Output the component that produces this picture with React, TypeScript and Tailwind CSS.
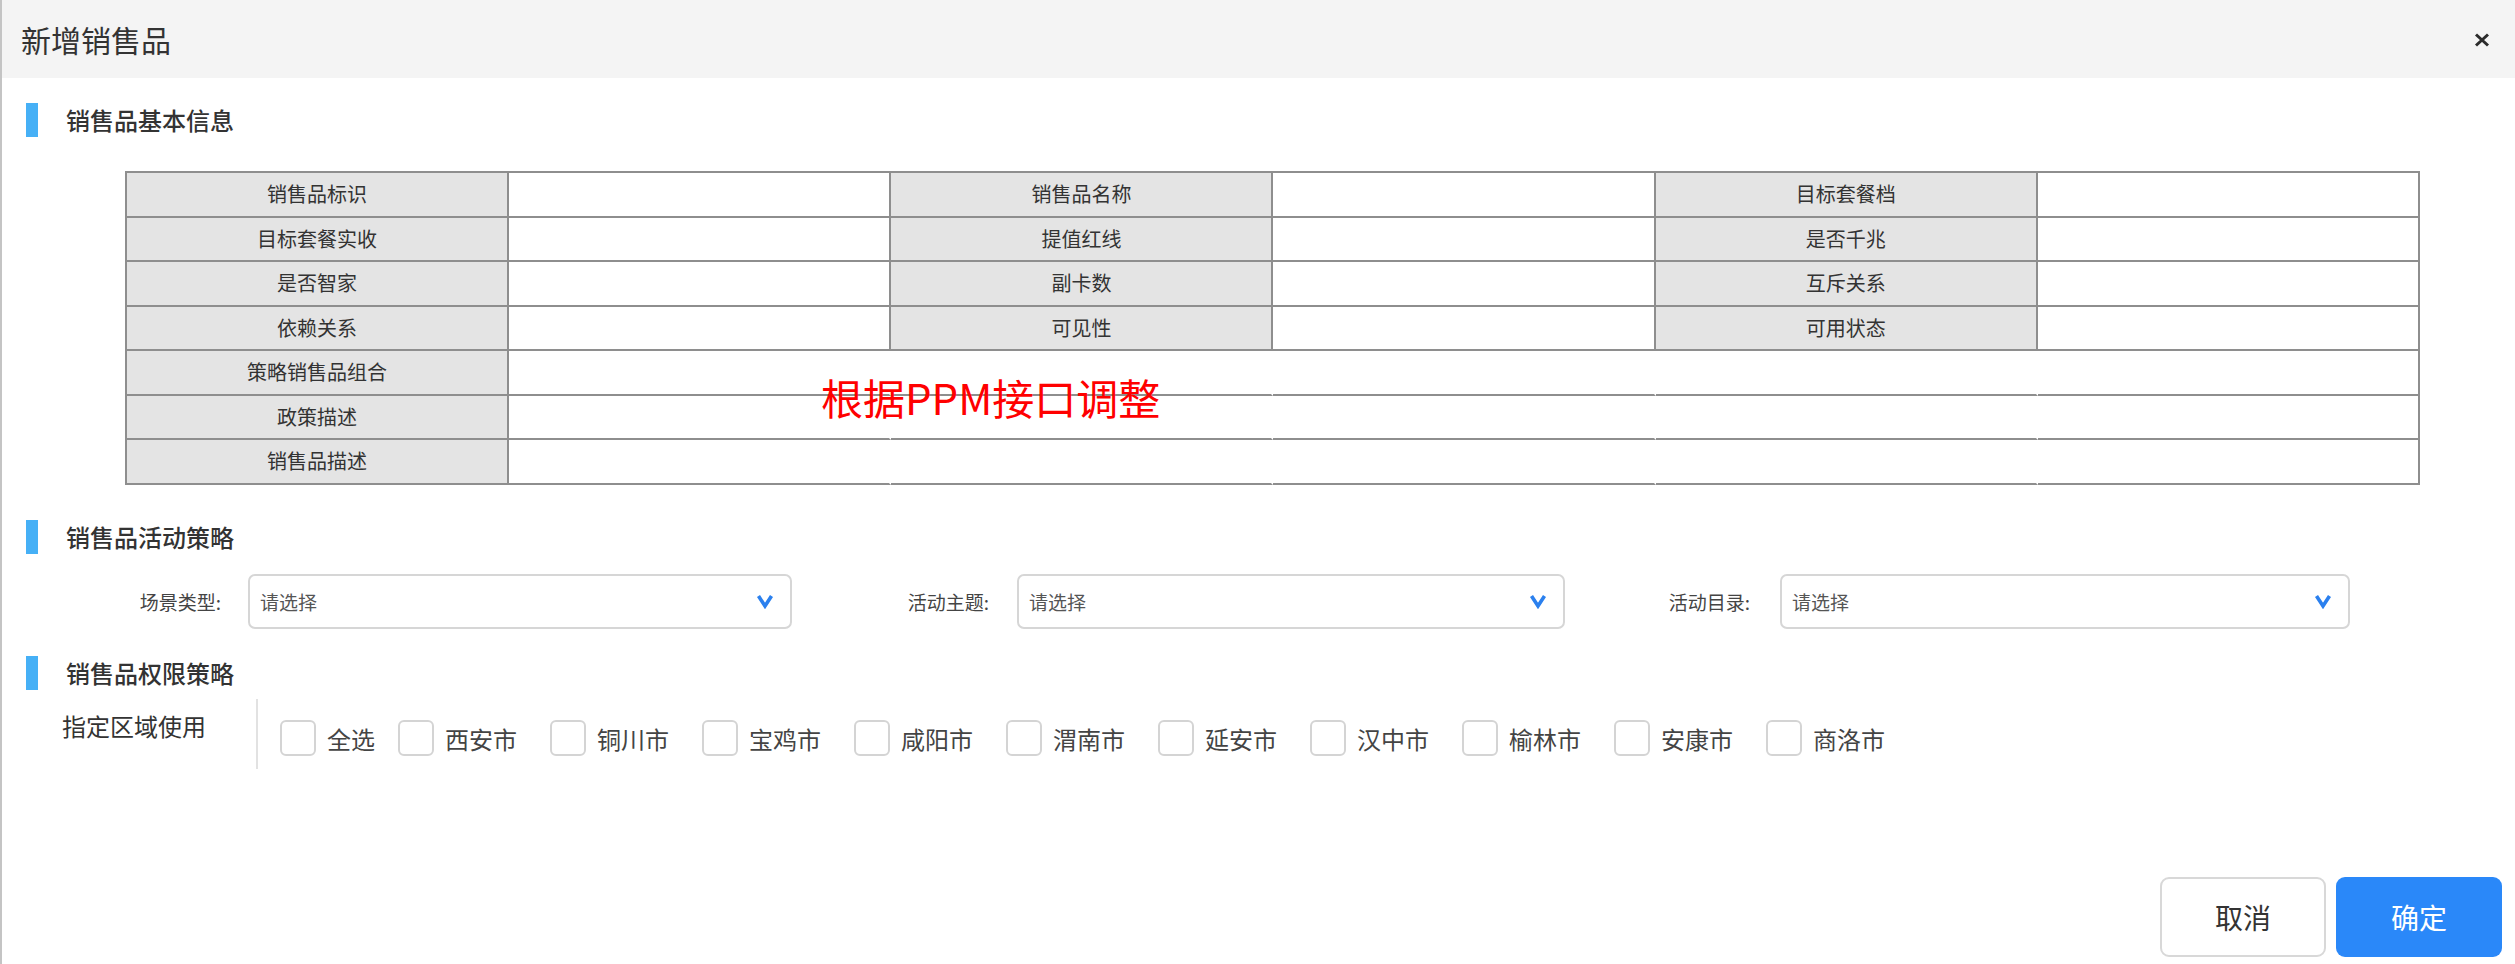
const font = { fontFamily: '"Noto Sans CJK SC", "Noto Sans", sans-serif' };

const rows: string[][] = [
  ["销售品标识", "销售品名称", "目标套餐档"],
  ["目标套餐实收", "提值红线", "是否千兆"],
  ["是否智家", "副卡数", "互斥关系"],
  ["依赖关系", "可见性", "可用状态"],
];

const wideRows = ["策略销售品组合", "政策描述", "销售品描述"];

const cities = ["西安市", "铜川市", "宝鸡市", "咸阳市", "渭南市", "延安市", "汉中市", "榆林市", "安康市", "商洛市"];

function SectionTitle({ text }: { text: string }) {
  return (
    <div className="flex items-center h-[34px] pl-[24px] gap-[28px]">
      <div className="w-[12px] h-[34px] bg-[#46b0f6]" />
      <span className="text-[24px] leading-none text-[#333] font-medium">{text}</span>
    </div>
  );
}

function Chevron() {
  return (
    <svg width="18" height="16" viewBox="0 0 18 16" fill="none">
      <path d="M2.5 3 L9 13 L15.5 3" stroke="#2b80ee" strokeWidth="3.6" strokeLinejoin="miter" />
    </svg>
  );
}

function SelectBox({ label, labelBox, pr, width }: { label: string; labelBox: number; pr: number; width: number }) {
  return (
    <div className="flex items-center">
      <div className="text-right text-[19px] text-[#444] leading-none" style={{ width: labelBox, paddingRight: pr }}>
        {label}
      </div>
      <div
        className="h-[55px] rounded-[7px] border-2 border-[#d6d6d6] bg-white flex items-center justify-between pl-[10px] pr-[16px]"
        style={{ width }}
      >
        <span className="text-[19px] text-[#555] leading-none">请选择</span>
        <Chevron />
      </div>
    </div>
  );
}

function CheckItem({ text, last, first }: { text: string; last?: boolean; first?: boolean }) {
  return (
    <div className={`flex items-center gap-[11px] ${first ? "mr-[23px]" : last ? "" : "mr-[33px]"}`}>
      <div className="w-[36px] h-[36px] rounded-[6px] border-2 border-[#d4d4d4] bg-white" />
      <span className="text-[24px] leading-none text-[#444] mt-[3px]">{text}</span>
    </div>
  );
}

export default function App() {
  return (
    <div className="w-full h-[964px] bg-white border-l-2 border-[#c4c4c4] flex flex-col" style={font}>
      {/* header */}
      <div className="h-[78px] bg-[#f4f4f4] flex items-center justify-between pl-[19px] pr-[25px] shrink-0">
        <span className="text-[30px] leading-none text-[#333]">新增销售品</span>
        <svg width="16" height="14" viewBox="0 0 16 14" className="mt-[1px]">
          <path d="M2 1.5 L14 12.5 M14 1.5 L2 12.5" stroke="#2b2b2b" strokeWidth="3" />
        </svg>
      </div>

      <div className="mt-[25px]">
        <SectionTitle text="销售品基本信息" />
      </div>

      {/* info table */}
      <div className="relative mt-[34px] ml-[123px] w-[2295px]">
        <div className="grid grid-cols-6 border-t-2 border-l-2 border-[#8e8e8e] text-[20px] text-[#333]">
          {rows.map((r, i) =>
            r.map((lab, j) => (
              <div key={`${i}-${j}`} className="contents">
                <div className="h-[44.5px] border-r-2 border-b-2 border-[#8e8e8e] bg-[#e4e4e4] flex items-center justify-center leading-none">
                  {lab}
                </div>
                <div className="h-[44.5px] border-r-2 border-b-2 border-[#8e8e8e] bg-white" />
              </div>
            ))
          )}
          {wideRows.map((lab) => (
            <div key={lab} className="contents">
              <div className="h-[44.5px] border-r-2 border-b-2 border-[#8e8e8e] bg-[#e4e4e4] flex items-center justify-center leading-none">
                {lab}
              </div>
              <div className="h-[44.5px] border-b-2 border-r-2 border-b-[#8e8e8e] border-r-white bg-white" />
              <div className="h-[44.5px] border-b-2 border-r-2 border-b-[#8e8e8e] border-r-white bg-white" />
              <div className="h-[44.5px] border-b-2 border-r-2 border-b-[#8e8e8e] border-r-white bg-white" />
              <div className="h-[44.5px] border-b-2 border-r-2 border-b-[#8e8e8e] border-r-white bg-white" />
              <div className="h-[44.5px] border-b-2 border-r-2 border-[#8e8e8e] bg-white" />
            </div>
          ))}
        </div>
        <div className="absolute left-[696px] top-[205px] text-[42px] leading-none text-[#ff0000] whitespace-nowrap">
          根据PPM接口调整
        </div>
      </div>

      <div className="mt-[35px]">
        <SectionTitle text="销售品活动策略" />
      </div>

      {/* selects */}
      <div className="flex items-center mt-[20px]">
        <SelectBox label="场景类型:" labelBox={246} pr={27} width={544} />
        <SelectBox label="活动主题:" labelBox={225} pr={28} width={548} />
        <SelectBox label="活动目录:" labelBox={215} pr={30} width={570} />
      </div>

      <div className="mt-[27px]">
        <SectionTitle text="销售品权限策略" />
      </div>

      {/* region */}
      <div className="flex items-center mt-[9px] h-[70px]">
        <div className="w-[254px] pl-[60px] self-start pt-[15px] text-[24px] leading-none text-[#333]">指定区域使用</div>
        <div className="w-[2px] h-full bg-[#e2e2e2]" />
        <div className="flex items-center ml-[22px] mt-[8px]">
          <CheckItem text="全选" first />
          {cities.map((c, i) => (
            <CheckItem key={c} text={c} last={i === cities.length - 1} />
          ))}
        </div>
      </div>

      {/* footer buttons */}
      <div className="mt-auto mb-[7px] flex justify-end gap-[10px] pr-[13px]">
        <button className="w-[166px] h-[80px] rounded-[9px] border-2 border-[#d8d8d8] bg-white text-[28px] text-[#333] leading-none">
          取消
        </button>
        <button className="w-[166px] h-[80px] rounded-[9px] bg-[#2a88f9] text-[28px] text-white leading-none">
          确定
        </button>
      </div>
    </div>
  );
}
